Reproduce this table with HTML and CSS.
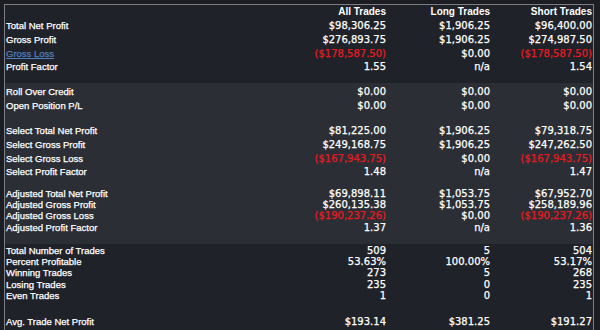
FILE: index.html
```html
<!DOCTYPE html>
<html>
<head>
<meta charset="utf-8">
<link rel="stylesheet" href="styles.css">
</head>
<body>
<div class="frame">
  <div class="panel">
    <section class="sec sec-a">
      <div class="row head h14"><span></span><span>All Trades</span><span>Long Trades</span><span>Short Trades</span></div>
      <div class="row h14"><span class="lbl">Total Net Profit</span><span>$98,306.25</span><span>$1,906.25</span><span>$96,400.00</span></div>
      <div class="row h14"><span class="lbl">Gross Profit</span><span>$276,893.75</span><span>$1,906.25</span><span>$274,987.50</span></div>
      <div class="row h14"><span class="lbl link">Gross Loss</span><span class="neg">($178,587.50)</span><span>$0.00</span><span class="neg">($178,587.50)</span></div>
      <div class="row h12"><span class="lbl">Profit Factor</span><span>1.55</span><span>n/a</span><span>1.54</span></div>
    </section>
    <section class="sec sec-b">
      <div class="group">
        <div class="row h14"><span class="lbl">Roll Over Credit</span><span>$0.00</span><span>$0.00</span><span>$0.00</span></div>
        <div class="row h14"><span class="lbl">Open Position P/L</span><span>$0.00</span><span>$0.00</span><span>$0.00</span></div>
      </div>
      <div class="group">
        <div class="row h15"><span class="lbl">Select Total Net Profit</span><span>$81,225.00</span><span>$1,906.25</span><span>$79,318.75</span></div>
        <div class="row h14"><span class="lbl">Select Gross Profit</span><span>$249,168.75</span><span>$1,906.25</span><span>$247,262.50</span></div>
        <div class="row h14"><span class="lbl">Select Gross Loss</span><span class="neg">($167,943.75)</span><span>$0.00</span><span class="neg">($167,943.75)</span></div>
        <div class="row h12"><span class="lbl">Select Profit Factor</span><span>1.48</span><span>n/a</span><span>1.47</span></div>
      </div>
      <div class="group">
        <div class="row h11"><span class="lbl">Adjusted Total Net Profit</span><span>$69,898.11</span><span>$1,053.75</span><span>$67,952.70</span></div>
        <div class="row h11"><span class="lbl">Adjusted Gross Profit</span><span>$260,135.38</span><span>$1,053.75</span><span>$258,189.96</span></div>
        <div class="row h12"><span class="lbl">Adjusted Gross Loss</span><span class="neg">($190,237.26)</span><span>$0.00</span><span class="neg">($190,237.26)</span></div>
        <div class="row h11"><span class="lbl">Adjusted Profit Factor</span><span>1.37</span><span>n/a</span><span>1.36</span></div>
      </div>
    </section>
    <section class="sec sec-c">
      <div class="group">
        <div class="row h11"><span class="lbl">Total Number of Trades</span><span>509</span><span>5</span><span>504</span></div>
        <div class="row h11"><span class="lbl">Percent Profitable</span><span>53.63%</span><span>100.00%</span><span>53.17%</span></div>
        <div class="row h12"><span class="lbl">Winning Trades</span><span>273</span><span>5</span><span>268</span></div>
        <div class="row h11"><span class="lbl">Losing Trades</span><span>235</span><span>0</span><span>235</span></div>
        <div class="row h11"><span class="lbl">Even Trades</span><span>1</span><span>0</span><span>1</span></div>
      </div>
      <div class="group avg">
        <div class="row h11"><span class="lbl">Avg. Trade Net Profit</span><span>$193.14</span><span>$381.25</span><span>$191.27</span></div>
      </div>
    </section>
  </div>
</div>
</body>
</html>
```

FILE: styles.css
```css
html, body {
  margin: 0;
  padding: 0;
  background: #1b1d23;
  height: 100%;
  overflow: hidden;
}

.frame {
  padding: 4px 6px 0 4px;
  height: 100%;
  box-sizing: border-box;
}

.panel {
  border: 1px solid #7c7e83;
  border-bottom: none;
  height: 100%;
  box-sizing: border-box;
  background: #1f2229;
  color: #ffffff;
  font-family: "DejaVu Sans", Verdana, sans-serif;
  font-size: 10px;
  -webkit-text-stroke: 0.25px currentColor;
}

.sec-a {
  background: #1f2229;
  padding-bottom: 10px;
}

.sec-b {
  background: #2b2e35;
  padding: 2px 0 11px;
}

.sec-c {
  background: #1f2229;
  padding-top: 1px;
}

.group + .group {
  margin-top: 10px;
}

.group.avg {
  margin-top: 15px;
}

.row {
  display: grid;
  grid-template-columns: 1fr 100px 104px 102px;
  padding: 0 1px;
  white-space: nowrap;
}

.row span {
  text-align: right;
}

.row .lbl {
  text-align: left;
  font-family: "Liberation Sans", Arial, sans-serif;
  font-size: 9.5px;
}

.head span {
  font-family: "Liberation Sans", Arial, sans-serif;
  font-weight: bold;
  font-size: 10px;
  -webkit-text-stroke: 0;
}

.h11 { height: 11px; line-height: 11px; }
.h12 { height: 12px; line-height: 12px; }
.h14 { height: 14px; line-height: 14px; }
.h15 { height: 15px; line-height: 15px; }

.link {
  color: #4f7dbd;
  text-decoration: underline;
}

.neg {
  color: #e51b22;
}
```
